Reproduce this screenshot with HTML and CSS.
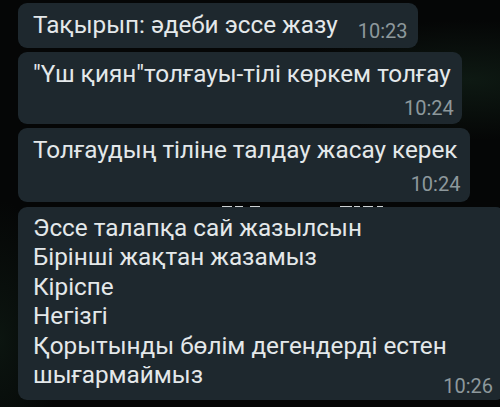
FILE: index.html
```html
<!DOCTYPE html>
<html lang="kk">
<head>
    <meta charset="UTF-8">
    <meta name="viewport" content="width=device-width, initial-scale=1.0">
    <title>Чат</title>
    <link rel="stylesheet" href="styles.css">
</head>
<body>
    <div class="chat">
        <!-- single line message, time sits on the same line -->
        <div class="bubble inline">
            <span class="text">Тақырып: әдеби эссе жазу</span>
            <span class="time">10:23</span>
        </div>

        <div class="bubble">
            <div class="text">"Үш қиян"толғауы-тілі көркем толғау</div>
            <div class="time">10:24</div>
        </div>

        <div class="bubble tall">
            <div class="text">Толғаудың тіліне талдау жасау керек</div>
            <div class="time">10:24</div>
        </div>

        <!-- tops of the date chip hidden behind the next bubble -->
        <div class="peek">
            <svg width="482" height="2" viewBox="0 0 482 2">
                <g fill="#cdd2d4">
                    <rect x="204" y="0" width="10" height="2"/>
                    <rect x="217" y="0" width="8" height="2"/>
                    <rect x="232" y="0" width="10" height="2"/>
                    <rect x="322" y="0" width="12" height="2"/>
                    <rect x="336" y="0" width="6" height="2"/>
                    <rect x="345" y="0" width="10" height="2"/>
                    <rect x="359" y="0" width="6" height="2"/>
                </g>
            </svg>
        </div>

        <div class="bubble long">
            <div class="text">
                Эссе талапқа сай жазылсын<br>
                Бірінші жақтан жазамыз<br>
                Кіріспе<br>
                Негізгі<br>
                Қорытынды бөлім дегендерді естен<br>
                шығармаймыз
            </div>
            <div class="time">10:26</div>
        </div>
    </div>
</body>
</html>
```

FILE: styles.css
```css
body {
    margin: 0;
    padding: 0;
    height: 407px;
    overflow: hidden;
    background-color: #050606;
    background-image:
        radial-gradient(ellipse 180px 60px at 470px 80px, rgba(24, 48, 34, 0.45), transparent),
        radial-gradient(ellipse 60px 140px at 0 340px, rgba(24, 48, 34, 0.35), transparent);
    font-family: Roboto, "Noto Sans", sans-serif;
}
.chat {
    display: flex;
    flex-direction: column;
    align-items: flex-start;
    gap: 4px;
    padding: 3px 0 0 18px;
}
.bubble {
    background-color: #1e282e;
    border-radius: 9px;
    padding: 7px 8px 6.5px 15px;
}
.bubble.tall {
    padding-right: 10px;
    padding-bottom: 8px;
}
.text {
    color: #e4e8ea;
    font-size: 24.3px;
    line-height: 29.5px;
    padding-right: 3px;
    white-space: nowrap;
}
.time {
    color: #8d989c;
    font-size: 20px;
    line-height: 20px;
    text-align: right;
    margin-top: 9px;
}
.bubble.inline {
    display: flex;
    align-items: baseline;
    gap: 20px;
    padding: 7px 10px 8.5px 15px;
}
.bubble.inline .text {
    padding-right: 0;
}
.bubble.inline .time {
    margin-top: 0;
    position: relative;
    top: 5px;
}
.peek {
    height: 2px;
    margin: -3px 0 -2px;
    line-height: 0;
}
.bubble.long {
    display: flex;
    align-items: flex-end;
    width: 460px;
    padding: 6px 12px 4px 15px;
}
.bubble.long .text {
    flex: 1;
    min-width: 0;
    padding-bottom: 6px;
}
.bubble.long .time {
    margin-top: 0;
}
```
